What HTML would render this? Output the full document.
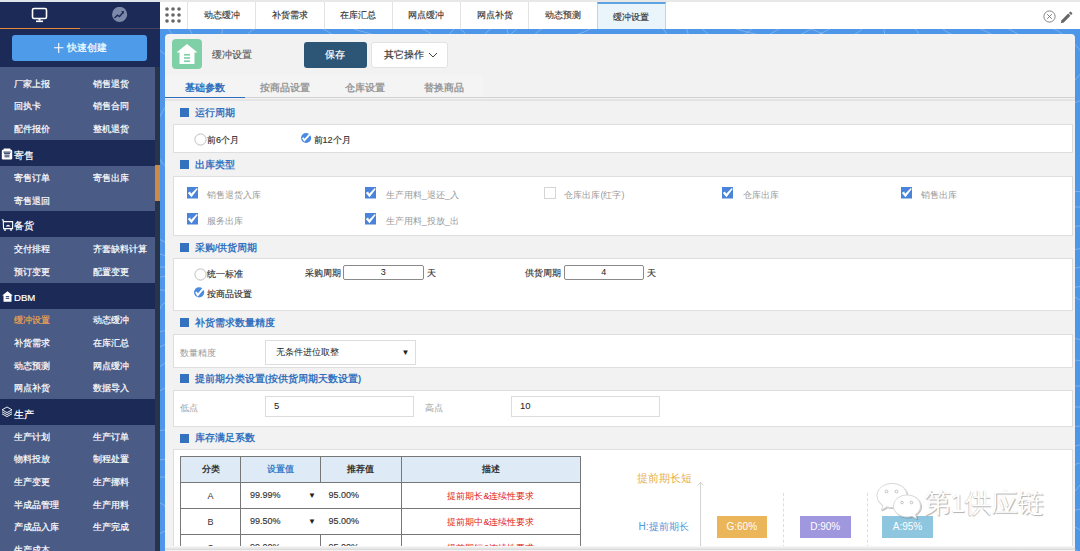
<!DOCTYPE html>
<html><head><meta charset="utf-8">
<style>
*{margin:0;padding:0;box-sizing:border-box}
html,body{width:1080px;height:551px;overflow:hidden;background:#4e96e7;font-family:"Liberation Sans",sans-serif}
.a{position:absolute;white-space:nowrap}
#side{position:absolute;left:0;top:0;width:160px;height:551px;background:#1b2a57;overflow:hidden}
.mi{position:absolute;color:#fff;font-size:9px;line-height:12px;-webkit-text-stroke-width:0.2px}
.grp{position:absolute;left:0;width:155px;background:#4a5b86}
.hd{position:absolute;left:14px;color:#fff;font-size:9.6px;line-height:14px;-webkit-text-stroke-width:0.2px}
#top{position:absolute;left:160px;top:0;width:920px;height:29px;background:#fff;border-top:2px solid #e8e8e8}
.tab{position:absolute;top:0;height:27px;border-right:1px solid #e3e3e3;font-size:9px;color:#333;-webkit-text-stroke-width:0.15px;text-align:center;line-height:26px}
#card{position:absolute;left:165px;top:34px;width:910px;height:517px;background:#f2f2f2;border-radius:4px 4px 0 0;overflow:hidden}
.sq{position:absolute;width:9px;height:9px;background:#3471bf}
.st{position:absolute;color:#3471bf;font-size:9.5px;font-weight:bold;line-height:12px}
.box{position:absolute;left:8px;width:900px;background:#fff;border:1px solid #dedede}
.lbl{position:absolute;font-size:9px;color:#999;line-height:12px}
.cb{position:absolute;width:11px;height:11px;background:#4a8ae0}
.txt{position:absolute;font-size:9px;color:#333;line-height:12px;-webkit-text-stroke-width:0.15px}
</style></head><body>
<svg class="a" style="left:0;top:0" width="1080" height="551" viewBox="0 0 1080 551" fill="none" stroke="rgba(255,255,255,0.32)" stroke-width="0.8"><path d="M335 60 L334 62 L332 64 L329 65 L326 66 L323 67 L320 67 L318 68 L316 68 L314 69 L314 70 L313 72 L312 73 L311 75 L310 77 L308 79 L306 80 L303 81 L300 81 L297 81 L294 81 L291 80 L288 80 L286 79 L283 78 L281 77 L278 76 L276 75 L275 73 L274 71 L274 69 L275 67 L276 66 L277 64 L279 62 L280 61 L280 60 L280 59 L278 58 L277 56 L275 54 L274 52 L273 50 L272 48 L273 46 L275 44 L277 43 L280 42 L283 42 L287 42 L290 42 L293 43 L295 43 L298 43 L300 43 L302 43 L305 43 L307 43 L310 43 L312 44 L314 45 L316 46 L318 47 L319 48 L321 49 L323 50 L325 51 L327 52 L330 53 L332 55 L334 56 L335 58 L335 60"/><path d="M367 60 L365 64 L360 67 L355 69 L349 71 L343 72 L337 73 L333 74 L330 76 L328 78 L327 80 L326 83 L325 87 L322 90 L319 93 L315 96 L311 98 L305 99 L300 100 L294 100 L289 99 L283 99 L278 98 L273 97 L267 95 L262 94 L258 92 L254 89 L251 85 L250 82 L251 78 L253 74 L255 70 L258 67 L260 64 L262 62 L262 60 L260 58 L258 55 L254 52 L251 49 L248 45 L247 41 L247 37 L249 33 L252 30 L257 28 L263 27 L269 27 L275 26 L281 27 L286 27 L291 27 L295 26 L300 26 L305 26 L310 26 L314 26 L319 28 L323 29 L327 31 L330 33 L333 35 L336 37 L340 39 L344 41 L348 43 L353 44 L358 47 L363 49 L366 53 L368 56 L367 60"/><path d="M397 60 L392 65 L385 69 L377 73 L368 75 L360 77 L353 79 L348 81 L344 83 L342 86 L341 90 L339 95 L336 99 L333 104 L328 108 L322 112 L315 114 L308 115 L300 116 L292 116 L284 116 L276 116 L268 115 L260 114 L252 112 L244 110 L237 107 L232 102 L229 97 L229 91 L230 85 L234 79 L238 74 L242 70 L244 66 L246 63 L245 60 L242 57 L237 53 L232 49 L227 43 L223 38 L222 32 L223 26 L227 22 L233 18 L240 15 L248 14 L256 13 L264 12 L272 12 L279 11 L286 11 L293 10 L300 9 L307 9 L314 10 L321 11 L327 14 L333 16 L337 19 L342 23 L346 26 L351 28 L357 30 L364 32 L371 34 L379 37 L387 40 L393 44 L397 49 L399 55 L397 60"/><path d="M437 60 L429 67 L419 73 L407 78 L395 82 L384 84 L375 87 L369 90 L365 94 L363 99 L360 105 L357 111 L353 117 L347 123 L340 128 L331 132 L321 135 L311 137 L300 138 L289 139 L278 139 L266 140 L254 140 L241 139 L229 137 L218 133 L209 128 L203 121 L199 113 L200 104 L203 95 L208 87 L214 80 L219 74 L222 69 L222 64 L219 60 L214 55 L207 50 L199 43 L193 36 L189 28 L189 20 L191 12 L198 6 L206 1 L217 -2 L228 -5 L239 -6 L249 -8 L260 -9 L270 -11 L280 -12 L290 -14 L300 -14 L310 -14 L320 -12 L330 -9 L338 -5 L345 -1 L352 4 L358 8 L365 12 L372 15 L381 17 L392 20 L404 22 L416 26 L427 31 L435 37 L440 45 L441 52 L437 60"/><path d="M461 60 L451 68 L438 75 L424 81 L411 85 L400 89 L391 93 L385 97 L381 102 L378 109 L375 116 L370 123 L364 130 L356 136 L347 141 L336 144 L325 147 L313 150 L300 152 L287 153 L273 155 L259 157 L243 157 L228 157 L213 154 L200 149 L190 142 L183 133 L181 123 L182 111 L187 101 L194 91 L200 83 L205 76 L207 70 L206 65 L201 60 L193 54 L184 47 L176 39 L169 30 L166 21 L167 12 L172 4 L180 -3 L191 -8 L202 -13 L215 -16 L227 -19 L239 -22 L251 -24 L263 -27 L275 -29 L287 -31 L300 -31 L313 -29 L324 -26 L335 -22 L344 -16 L353 -10 L360 -5 L367 -0 L376 3 L386 6 L399 8 L413 11 L428 14 L443 18 L455 25 L464 32 L469 41 L468 51 L461 60"/><path d="M496 60 L483 70 L467 78 L451 85 L436 91 L424 96 L416 102 L409 108 L405 115 L400 123 L395 131 L389 139 L380 147 L369 153 L357 158 L344 162 L330 166 L315 169 L300 172 L284 176 L266 179 L248 182 L228 184 L208 183 L189 180 L174 173 L162 163 L155 150 L154 137 L157 122 L164 109 L172 97 L179 88 L183 80 L184 73 L180 67 L172 60 L162 52 L151 44 L142 34 L136 23 L134 12 L137 1 L144 -8 L155 -16 L167 -23 L181 -29 L195 -33 L209 -38 L223 -43 L238 -47 L252 -51 L268 -54 L284 -56 L300 -55 L316 -52 L330 -46 L343 -40 L354 -32 L363 -25 L372 -18 L382 -13 L394 -10 L408 -8 L425 -6 L444 -3 L464 1 L482 7 L497 15 L506 25 L509 37 L506 49 L496 60"/><path d="M648 80 L649 82 L650 83 L649 85 L647 86 L645 87 L643 88 L640 89 L638 89 L635 90 L633 90 L632 90 L630 91 L629 91 L627 92 L625 92 L624 93 L622 93 L620 93 L618 93 L616 93 L615 93 L613 93 L610 93 L608 93 L605 93 L602 93 L599 93 L596 92 L594 91 L592 90 L592 88 L592 86 L593 85 L595 83 L597 81 L599 80 L601 79 L602 78 L603 77 L603 76 L603 75 L603 74 L603 72 L603 71 L603 70 L605 68 L606 67 L608 67 L610 66 L612 66 L614 65 L616 65 L618 64 L620 64 L622 64 L625 64 L627 64 L629 64 L631 65 L633 66 L634 68 L635 69 L635 71 L635 72 L636 73 L637 74 L638 75 L640 75 L642 76 L644 77 L647 79 L648 80"/><path d="M685 80 L687 84 L686 87 L684 91 L680 94 L675 96 L670 98 L664 99 L659 101 L655 102 L651 103 L647 104 L643 105 L640 107 L636 108 L632 108 L628 109 L624 109 L620 109 L616 108 L612 108 L608 108 L603 109 L598 109 L592 110 L585 111 L578 111 L571 110 L565 109 L561 106 L558 103 L557 98 L558 94 L561 90 L565 86 L569 83 L573 80 L577 78 L579 75 L580 73 L580 71 L580 68 L580 65 L580 62 L581 60 L583 57 L586 54 L589 53 L593 51 L597 50 L602 48 L606 47 L610 46 L615 44 L620 43 L625 42 L631 42 L636 43 L641 44 L645 47 L648 50 L650 53 L652 56 L653 60 L654 62 L655 65 L658 66 L661 68 L666 70 L671 71 L677 74 L681 77 L685 80"/><path d="M726 80 L728 86 L726 92 L722 97 L716 102 L708 106 L700 109 L692 111 L684 114 L677 116 L671 118 L665 120 L659 123 L653 124 L647 126 L640 126 L633 126 L626 126 L620 125 L614 124 L607 124 L601 125 L593 127 L584 128 L574 130 L562 132 L551 132 L539 130 L530 127 L523 122 L519 116 L519 110 L521 102 L526 96 L532 90 L539 84 L545 80 L549 76 L552 72 L553 69 L553 65 L553 60 L553 56 L554 51 L557 47 L561 43 L566 39 L571 37 L578 34 L584 32 L590 29 L597 26 L604 23 L612 21 L620 18 L629 17 L638 17 L646 18 L654 22 L660 26 L665 31 L668 37 L670 43 L672 48 L674 52 L677 55 L682 58 L689 60 L697 62 L706 66 L715 70 L722 74 L726 80"/><path d="M766 80 L767 88 L763 96 L757 103 L748 109 L738 114 L728 119 L718 123 L709 127 L701 130 L693 134 L684 137 L676 140 L666 142 L657 143 L647 143 L637 142 L628 141 L620 139 L612 139 L603 140 L594 141 L582 144 L569 148 L555 151 L539 153 L522 153 L508 150 L495 145 L487 138 L483 129 L483 120 L488 110 L494 101 L502 93 L510 86 L516 80 L521 75 L523 69 L524 64 L524 58 L525 52 L526 46 L529 40 L534 35 L540 30 L547 26 L555 22 L563 18 L571 15 L579 10 L588 5 L598 1 L608 -4 L620 -7 L632 -9 L645 -8 L656 -5 L666 0 L674 7 L680 15 L684 23 L687 30 L689 37 L693 42 L699 45 L707 49 L718 52 L730 55 L742 60 L753 65 L761 72 L766 80"/><path d="M793 80 L793 89 L788 99 L780 107 L770 114 L759 121 L749 126 L739 132 L729 137 L720 142 L710 147 L699 151 L688 154 L676 155 L664 155 L652 154 L640 152 L630 150 L620 149 L610 149 L600 151 L588 154 L574 159 L558 163 L539 167 L520 169 L501 169 L484 165 L471 158 L462 149 L459 138 L460 127 L465 115 L473 105 L481 95 L488 87 L494 80 L498 73 L500 67 L501 60 L502 53 L504 46 L507 39 L512 33 L519 27 L527 22 L536 17 L545 13 L553 8 L562 2 L571 -4 L581 -11 L593 -17 L606 -23 L620 -27 L635 -28 L650 -26 L664 -22 L675 -14 L684 -5 L690 4 L694 14 L698 22 L702 29 L708 34 L716 38 L727 41 L741 45 L755 49 L769 55 L781 62 L790 71 L793 80"/><path d="M822 80 L820 91 L814 101 L805 111 L794 120 L783 128 L773 135 L762 142 L752 149 L741 156 L729 161 L716 166 L701 168 L686 169 L671 168 L656 165 L643 162 L631 160 L620 159 L609 160 L597 163 L582 169 L565 175 L544 181 L522 186 L499 188 L477 186 L459 181 L444 172 L436 161 L433 147 L435 134 L441 121 L449 109 L457 98 L463 89 L468 80 L471 72 L473 64 L474 56 L477 47 L481 39 L487 32 L495 25 L504 19 L514 14 L524 8 L533 2 L542 -4 L551 -12 L561 -21 L573 -30 L587 -38 L603 -45 L620 -49 L638 -49 L656 -46 L671 -39 L684 -29 L693 -18 L700 -7 L705 4 L710 13 L716 20 L725 25 L736 29 L751 33 L768 37 L784 43 L800 50 L812 59 L819 69 L822 80"/><path d="M860 80 L856 93 L849 105 L839 117 L828 127 L818 138 L807 148 L796 157 L785 166 L771 175 L756 181 L738 185 L719 187 L699 186 L680 183 L663 179 L647 175 L633 173 L620 173 L607 176 L591 182 L573 190 L551 198 L526 206 L499 211 L471 213 L446 210 L425 202 L410 190 L402 176 L399 160 L402 144 L408 128 L415 114 L422 102 L427 91 L431 80 L434 70 L436 60 L439 50 L444 40 L452 31 L461 23 L472 15 L484 9 L496 2 L507 -4 L516 -12 L526 -22 L536 -33 L547 -45 L561 -57 L579 -67 L598 -75 L620 -78 L642 -77 L663 -72 L681 -62 L695 -49 L706 -35 L714 -22 L721 -10 L728 -0 L737 7 L750 12 L765 16 L784 21 L804 26 L823 34 L840 43 L852 54 L859 67 L860 80"/><path d="M925 40 L927 41 L929 43 L929 45 L929 47 L928 48 L927 50 L924 50 L921 51 L918 51 L915 51 L912 51 L910 50 L908 50 L906 50 L905 51 L903 51 L902 52 L900 53 L898 53 L896 53 L894 54 L892 53 L890 53 L888 53 L886 52 L884 52 L882 51 L879 51 L877 50 L875 49 L873 48 L872 46 L871 45 L872 43 L873 41 L874 40 L877 39 L879 38 L881 37 L883 36 L884 35 L884 34 L885 33 L884 32 L884 30 L885 29 L886 27 L887 26 L889 25 L891 24 L893 24 L895 24 L898 24 L900 25 L902 25 L904 26 L906 26 L908 27 L910 27 L912 27 L913 28 L915 29 L916 30 L917 31 L918 32 L918 33 L919 35 L919 36 L920 37 L922 38 L924 39 L925 40"/><path d="M960 40 L964 44 L968 47 L969 52 L968 56 L965 59 L960 62 L954 64 L947 65 L940 65 L933 65 L927 64 L922 64 L918 64 L914 65 L911 66 L908 67 L904 68 L900 69 L896 70 L891 71 L887 71 L882 70 L878 69 L873 69 L869 68 L863 67 L858 67 L852 65 L846 64 L841 61 L836 59 L834 55 L833 51 L835 47 L838 43 L842 40 L848 37 L853 35 L857 33 L860 31 L862 29 L863 27 L863 24 L863 21 L863 17 L864 13 L866 10 L870 7 L874 5 L879 4 L884 4 L890 4 L895 4 L900 5 L905 6 L909 7 L914 7 L919 8 L923 9 L928 10 L931 12 L935 14 L937 17 L939 20 L940 23 L941 25 L942 28 L944 30 L947 32 L951 34 L955 37 L960 40"/><path d="M1001 40 L1008 46 L1013 52 L1014 59 L1012 65 L1006 71 L997 75 L987 78 L975 79 L964 80 L953 80 L944 80 L937 80 L930 81 L924 82 L919 84 L913 86 L907 87 L900 89 L893 89 L886 89 L879 89 L872 88 L865 87 L857 86 L849 86 L839 85 L829 84 L819 83 L809 80 L800 76 L794 71 L791 65 L791 58 L794 52 L800 45 L808 40 L817 35 L824 32 L831 28 L835 25 L837 22 L838 17 L837 13 L837 7 L838 1 L840 -4 L845 -9 L851 -13 L858 -16 L866 -18 L875 -18 L884 -18 L892 -17 L900 -17 L908 -16 L916 -16 L924 -15 L932 -14 L939 -12 L946 -10 L952 -6 L956 -2 L959 3 L961 8 L963 12 L965 17 L967 20 L971 24 L977 27 L985 31 L993 35 L1001 40"/><path d="M1028 40 L1036 47 L1040 55 L1040 64 L1036 71 L1028 77 L1017 82 L1004 85 L990 87 L977 88 L965 89 L955 89 L946 90 L938 92 L931 93 L924 96 L916 97 L908 99 L900 99 L892 99 L883 99 L875 98 L867 97 L858 96 L848 96 L837 96 L825 96 L811 95 L798 94 L786 90 L775 85 L769 78 L766 71 L767 62 L773 54 L781 47 L790 40 L800 35 L809 30 L815 26 L819 22 L820 17 L821 11 L820 5 L821 -2 L822 -8 L826 -15 L833 -20 L841 -24 L850 -27 L860 -29 L870 -30 L880 -30 L890 -30 L900 -30 L910 -30 L920 -30 L930 -30 L940 -28 L949 -26 L957 -22 L963 -17 L968 -11 L971 -4 L973 2 L975 7 L977 12 L981 16 L988 20 L996 24 L1007 28 L1018 34 L1028 40"/><path d="M1071 40 L1080 50 L1084 60 L1083 71 L1075 80 L1064 88 L1049 94 L1032 98 L1015 100 L999 102 L985 104 L973 105 L962 107 L952 110 L942 112 L932 114 L921 116 L911 117 L900 116 L889 115 L879 114 L869 113 L858 112 L846 112 L832 113 L817 114 L799 115 L781 114 L763 112 L748 107 L735 99 L728 90 L726 80 L729 69 L738 58 L749 48 L761 40 L772 33 L782 27 L788 21 L792 15 L793 9 L793 1 L793 -7 L794 -16 L798 -24 L804 -31 L813 -37 L824 -42 L836 -45 L849 -47 L862 -49 L875 -50 L887 -51 L900 -53 L913 -54 L927 -54 L940 -54 L953 -51 L965 -47 L975 -41 L982 -33 L987 -25 L990 -16 L992 -8 L995 -1 L999 4 L1006 9 L1016 14 L1029 18 L1043 24 L1058 31 L1071 40"/><path d="M1109 40 L1118 52 L1121 64 L1117 76 L1107 87 L1092 96 L1074 103 L1055 108 L1037 112 L1020 115 L1004 118 L990 121 L977 124 L965 127 L952 129 L939 131 L926 132 L913 131 L900 130 L888 128 L876 126 L864 125 L850 125 L835 127 L818 129 L798 131 L776 132 L753 132 L732 128 L714 122 L700 112 L693 100 L693 87 L699 74 L710 61 L723 50 L736 40 L748 32 L757 24 L763 17 L766 9 L766 1 L766 -8 L767 -18 L771 -28 L777 -37 L786 -45 L798 -51 L811 -56 L826 -60 L840 -63 L855 -65 L870 -68 L884 -71 L900 -74 L916 -76 L933 -77 L949 -75 L965 -72 L978 -65 L989 -57 L997 -46 L1002 -36 L1004 -25 L1007 -16 L1011 -9 L1018 -2 L1028 3 L1042 8 L1059 13 L1077 20 L1095 29 L1109 40"/><path d="M168 300 L166 301 L165 303 L163 304 L162 305 L161 306 L161 307 L160 309 L159 310 L157 311 L156 312 L154 312 L152 313 L150 313 L148 314 L146 314 L144 315 L142 315 L140 316 L138 317 L135 317 L133 317 L130 317 L127 317 L125 316 L124 314 L123 312 L123 311 L123 309 L124 307 L124 306 L124 305 L123 304 L122 303 L120 302 L118 301 L116 300 L114 299 L113 297 L112 295 L112 294 L113 292 L114 291 L116 289 L118 288 L120 287 L122 286 L124 285 L126 285 L128 284 L130 284 L133 284 L135 284 L138 284 L140 285 L142 287 L143 288 L145 289 L146 290 L147 290 L149 290 L151 290 L153 290 L156 290 L159 290 L163 290 L165 291 L168 292 L169 293 L170 295 L170 297 L169 298 L168 300"/><path d="M205 300 L202 303 L199 306 L197 309 L195 312 L193 315 L191 318 L188 321 L185 324 L182 326 L177 328 L173 329 L168 330 L163 331 L159 332 L154 333 L150 335 L145 337 L140 339 L134 341 L128 342 L122 343 L115 342 L110 340 L105 337 L102 333 L101 329 L101 325 L101 320 L102 317 L102 314 L101 311 L99 309 L95 307 L91 305 L86 303 L82 300 L78 297 L75 293 L74 289 L75 285 L77 282 L80 278 L83 275 L87 272 L91 270 L96 267 L100 265 L105 262 L111 261 L117 260 L123 260 L129 261 L135 263 L140 266 L144 269 L148 272 L151 275 L154 276 L157 277 L161 277 L166 276 L173 276 L180 275 L188 275 L195 276 L201 278 L206 281 L209 284 L210 288 L209 292 L207 296 L205 300"/><path d="M231 300 L228 305 L225 309 L223 314 L220 318 L218 323 L215 327 L210 331 L205 334 L199 337 L192 339 L185 340 L178 342 L172 343 L166 344 L160 347 L154 350 L147 353 L140 357 L132 360 L123 362 L113 362 L105 361 L97 358 L91 353 L88 347 L86 340 L86 334 L86 328 L86 323 L86 320 L83 316 L79 314 L74 311 L68 308 L61 304 L55 300 L51 295 L49 290 L48 285 L50 279 L52 274 L56 270 L61 265 L65 261 L70 256 L76 252 L82 248 L89 245 L97 243 L106 242 L115 243 L124 245 L133 248 L140 253 L146 257 L151 262 L155 265 L159 267 L165 267 L171 267 L179 265 L188 264 L199 263 L209 264 L219 265 L227 268 L233 273 L237 278 L238 284 L236 289 L234 295 L231 300"/><path d="M259 300 L257 306 L254 313 L252 319 L249 325 L245 331 L240 336 L234 341 L226 345 L217 348 L207 350 L198 352 L189 353 L181 355 L174 358 L167 362 L159 367 L150 372 L140 377 L129 381 L117 383 L104 383 L93 380 L84 375 L77 368 L73 360 L71 352 L70 344 L70 337 L70 331 L67 326 L63 322 L57 319 L50 315 L41 311 L34 306 L28 300 L23 294 L21 287 L22 280 L24 274 L27 267 L31 261 L36 254 L41 248 L47 242 L54 236 L62 230 L71 226 L83 223 L95 223 L108 224 L120 228 L131 234 L140 240 L148 246 L154 251 L160 254 L166 256 L173 256 L182 255 L193 253 L206 251 L220 250 L233 251 L245 254 L255 259 L261 265 L265 272 L266 279 L264 286 L262 293 L259 300"/><path d="M294 300 L292 308 L290 317 L288 325 L284 333 L279 340 L271 347 L261 353 L249 357 L236 360 L224 362 L212 364 L201 366 L192 370 L183 374 L174 380 L165 388 L153 395 L140 402 L125 406 L109 408 L94 407 L80 403 L69 395 L61 386 L56 375 L54 364 L52 355 L51 347 L49 340 L45 334 L38 330 L29 325 L20 320 L10 314 L2 308 L-4 300 L-8 292 L-9 284 L-8 275 L-5 267 L-2 259 L2 250 L6 241 L11 233 L18 224 L26 215 L37 208 L50 203 L65 200 L82 200 L99 204 L114 209 L128 217 L140 225 L149 233 L157 238 L165 242 L173 243 L183 242 L196 239 L211 237 L227 235 L244 235 L260 237 L274 241 L285 248 L292 256 L296 264 L298 274 L297 283 L295 292 L294 300"/><path d="M1127 300 L1125 301 L1123 303 L1121 303 L1118 304 L1117 305 L1116 306 L1115 307 L1115 308 L1115 310 L1115 311 L1115 313 L1114 315 L1112 317 L1110 318 L1108 319 L1105 319 L1103 319 L1100 319 L1097 318 L1095 318 L1093 317 L1090 316 L1088 316 L1086 315 L1084 314 L1083 313 L1082 311 L1082 310 L1082 308 L1082 307 L1082 305 L1083 304 L1083 303 L1082 302 L1081 301 L1080 300 L1078 299 L1075 297 L1074 296 L1072 294 L1072 292 L1072 290 L1074 288 L1076 287 L1078 287 L1081 286 L1084 286 L1087 286 L1090 286 L1092 286 L1094 286 L1096 286 L1098 285 L1100 285 L1102 285 L1104 285 L1106 285 L1109 285 L1110 286 L1112 287 L1114 288 L1116 288 L1117 289 L1119 290 L1122 291 L1124 291 L1126 292 L1128 294 L1129 295 L1129 297 L1129 298 L1127 300"/><path d="M1161 300 L1156 303 L1151 306 L1146 308 L1141 309 L1138 311 L1136 313 L1136 316 L1136 319 L1136 323 L1136 327 L1135 331 L1132 335 L1128 338 L1124 341 L1118 342 L1112 343 L1106 343 L1100 342 L1094 342 L1088 341 L1083 340 L1077 339 L1072 337 L1068 335 L1064 333 L1061 329 L1059 326 L1058 322 L1059 318 L1060 314 L1061 311 L1062 309 L1061 306 L1060 304 L1056 302 L1052 300 L1047 297 L1042 294 L1038 290 L1036 285 L1035 281 L1037 277 L1040 274 L1046 271 L1052 270 L1058 269 L1065 268 L1071 268 L1076 268 L1081 267 L1086 267 L1090 266 L1095 265 L1100 264 L1105 264 L1110 265 L1115 266 L1119 267 L1123 269 L1127 271 L1131 272 L1135 274 L1140 275 L1145 276 L1151 278 L1156 280 L1161 282 L1165 285 L1167 289 L1167 293 L1165 296 L1161 300"/><path d="M1188 300 L1181 304 L1173 308 L1166 311 L1160 314 L1157 317 L1155 320 L1155 324 L1155 329 L1155 335 L1154 340 L1152 346 L1148 351 L1142 356 L1134 359 L1126 361 L1117 362 L1109 362 L1100 362 L1091 362 L1083 361 L1074 360 L1066 359 L1058 356 L1051 353 L1045 349 L1041 344 L1039 338 L1039 332 L1041 326 L1043 321 L1045 316 L1045 313 L1044 309 L1040 307 L1034 304 L1027 300 L1019 296 L1012 290 L1006 284 L1004 278 L1004 272 L1007 267 L1013 262 L1021 259 L1030 256 L1039 255 L1048 254 L1056 253 L1064 252 L1071 250 L1078 249 L1085 248 L1093 247 L1100 246 L1107 247 L1115 248 L1121 250 L1127 253 L1133 255 L1139 258 L1145 260 L1152 261 L1160 263 L1168 264 L1177 266 L1185 269 L1193 273 L1198 278 L1200 283 L1199 289 L1195 295 L1188 300"/><path d="M1219 300 L1208 306 L1198 311 L1189 315 L1183 319 L1180 323 L1179 328 L1179 334 L1179 341 L1179 349 L1176 357 L1172 364 L1165 371 L1156 376 L1146 379 L1135 382 L1124 384 L1112 385 L1100 385 L1088 386 L1076 386 L1063 385 L1051 383 L1040 380 L1031 375 L1024 368 L1019 360 L1018 351 L1019 343 L1021 335 L1024 327 L1026 322 L1025 317 L1022 313 L1015 309 L1006 305 L995 300 L984 294 L975 286 L969 278 L967 270 L968 262 L974 255 L983 249 L994 244 L1006 241 L1017 239 L1029 236 L1039 234 L1049 232 L1059 230 L1069 227 L1079 226 L1089 225 L1100 225 L1110 227 L1120 230 L1129 233 L1137 237 L1145 240 L1153 243 L1162 245 L1172 246 L1184 247 L1197 249 L1210 252 L1221 256 L1231 262 L1236 269 L1238 277 L1235 285 L1228 293 L1219 300"/><path d="M1241 300 L1229 307 L1218 313 L1209 318 L1203 323 L1200 329 L1200 336 L1200 344 L1200 352 L1198 361 L1194 370 L1188 378 L1179 385 L1168 391 L1155 395 L1142 398 L1128 401 L1114 403 L1100 405 L1085 407 L1070 407 L1054 407 L1039 405 L1026 400 L1014 393 L1006 384 L1002 373 L1002 362 L1003 351 L1007 341 L1010 333 L1011 326 L1009 321 L1003 316 L993 312 L981 307 L967 300 L955 292 L945 283 L939 273 L938 263 L942 254 L949 246 L960 239 L973 233 L987 229 L1000 225 L1012 222 L1024 218 L1036 214 L1048 211 L1061 209 L1074 207 L1087 207 L1100 209 L1112 212 L1124 216 L1134 221 L1144 225 L1153 229 L1164 231 L1176 232 L1190 233 L1205 234 L1222 236 L1238 240 L1252 245 L1262 253 L1267 262 L1267 272 L1262 282 L1253 292 L1241 300"/><path d="M1259 300 L1246 308 L1235 315 L1227 321 L1222 328 L1220 335 L1220 343 L1220 352 L1218 362 L1215 372 L1209 381 L1200 389 L1189 396 L1176 402 L1162 407 L1148 411 L1132 415 L1117 419 L1100 423 L1082 426 L1064 427 L1046 427 L1028 424 L1013 417 L1001 408 L993 396 L989 383 L989 369 L992 357 L996 346 L998 337 L998 330 L993 324 L984 319 L972 314 L957 308 L942 300 L928 291 L919 280 L914 269 L915 258 L920 248 L930 239 L942 231 L956 225 L970 219 L984 213 L997 208 L1010 203 L1024 198 L1038 194 L1054 192 L1069 191 L1085 192 L1100 196 L1114 201 L1126 206 L1138 211 L1149 216 L1161 219 L1174 220 L1189 221 L1206 221 L1225 222 L1245 224 L1263 229 L1278 236 L1288 245 L1293 256 L1291 268 L1283 280 L1272 291 L1259 300"/><path d="M177 520 L178 522 L178 523 L178 525 L177 526 L175 527 L173 528 L171 529 L169 530 L167 531 L165 531 L163 532 L162 533 L160 533 L158 533 L156 534 L154 534 L152 533 L150 533 L148 532 L147 532 L145 532 L143 532 L141 532 L139 532 L136 533 L133 533 L129 533 L126 532 L124 532 L122 530 L120 529 L120 527 L121 525 L123 523 L124 521 L126 520 L128 519 L130 518 L131 517 L131 516 L132 515 L132 514 L133 513 L134 511 L135 510 L136 509 L137 509 L139 508 L141 507 L142 507 L144 506 L146 505 L148 504 L150 503 L152 503 L155 502 L158 502 L160 503 L162 504 L164 505 L165 507 L166 508 L166 510 L166 512 L166 513 L167 514 L168 515 L169 516 L171 516 L173 517 L175 519 L177 520"/><path d="M214 520 L216 524 L216 527 L214 531 L211 534 L208 537 L203 539 L199 541 L195 543 L190 545 L187 547 L182 549 L178 551 L174 552 L169 552 L164 552 L159 552 L154 550 L150 549 L146 548 L142 547 L139 547 L134 547 L129 548 L123 549 L116 551 L108 551 L100 551 L93 550 L87 547 L83 544 L81 540 L81 536 L83 531 L87 527 L91 523 L95 520 L98 517 L101 515 L103 512 L105 510 L106 507 L107 505 L109 502 L111 500 L114 498 L118 496 L121 494 L125 493 L128 491 L132 489 L136 487 L140 485 L145 482 L150 480 L156 478 L162 477 L168 477 L174 479 L179 481 L182 485 L185 489 L186 493 L186 497 L187 501 L188 503 L190 506 L192 508 L196 509 L201 511 L206 514 L210 517 L214 520"/><path d="M239 520 L241 525 L240 530 L238 535 L234 539 L229 543 L223 546 L218 550 L213 553 L208 556 L203 559 L197 562 L191 564 L184 565 L177 566 L169 565 L162 563 L156 561 L150 559 L145 558 L140 557 L134 557 L128 558 L120 560 L111 562 L101 564 L90 565 L79 564 L70 562 L62 559 L57 553 L55 548 L56 541 L59 535 L63 530 L68 524 L73 520 L77 516 L80 512 L82 509 L84 505 L86 501 L89 498 L92 495 L96 492 L101 489 L106 487 L111 485 L116 483 L120 480 L125 477 L130 474 L136 470 L142 466 L150 462 L158 460 L167 459 L176 460 L184 462 L190 467 L194 472 L197 478 L199 484 L200 489 L201 493 L203 497 L206 500 L211 502 L217 505 L224 508 L230 511 L236 515 L239 520"/><path d="M280 520 L281 527 L279 534 L275 541 L269 547 L263 553 L256 558 L250 564 L243 569 L236 574 L229 579 L220 583 L210 585 L200 587 L189 586 L178 584 L167 582 L158 578 L150 575 L143 573 L135 573 L127 574 L117 576 L105 580 L91 583 L76 586 L60 587 L45 585 L32 582 L23 576 L17 568 L15 559 L16 550 L20 542 L26 534 L32 526 L37 520 L41 514 L45 508 L48 503 L51 498 L55 492 L60 488 L66 483 L73 480 L81 477 L88 474 L95 471 L101 467 L107 463 L114 458 L121 451 L129 445 L139 439 L150 433 L163 430 L175 430 L188 432 L198 437 L207 444 L213 452 L217 460 L219 468 L221 475 L224 481 L228 486 L234 490 L242 493 L251 497 L261 501 L269 507 L276 513 L280 520"/><path d="M1122 520 L1122 521 L1122 522 L1124 524 L1125 526 L1127 528 L1129 530 L1130 533 L1130 536 L1128 538 L1126 540 L1123 541 L1120 542 L1116 542 L1112 541 L1109 541 L1106 540 L1103 539 L1100 539 L1097 538 L1095 538 L1092 538 L1090 537 L1088 536 L1086 535 L1084 534 L1083 533 L1081 532 L1080 530 L1079 529 L1077 528 L1075 527 L1072 526 L1069 525 L1066 524 L1064 522 L1062 520 L1062 518 L1062 516 L1064 514 L1067 512 L1070 511 L1073 510 L1077 510 L1080 509 L1082 509 L1084 508 L1085 507 L1087 505 L1088 504 L1090 502 L1092 500 L1094 499 L1097 498 L1100 498 L1103 498 L1106 498 L1109 499 L1112 500 L1114 501 L1117 502 L1119 503 L1121 504 L1124 505 L1125 507 L1127 508 L1127 510 L1127 512 L1127 514 L1126 516 L1124 517 L1123 519 L1122 520"/><path d="M1140 520 L1140 522 L1142 525 L1145 528 L1149 531 L1152 535 L1155 540 L1157 545 L1156 549 L1153 553 L1149 557 L1143 559 L1137 560 L1130 560 L1123 559 L1117 559 L1111 558 L1105 557 L1100 556 L1095 556 L1090 555 L1086 554 L1081 552 L1077 551 L1074 548 L1071 546 L1069 543 L1066 541 L1064 539 L1061 537 L1057 536 L1052 534 L1046 532 L1041 530 L1035 527 L1031 524 L1028 520 L1028 516 L1030 512 L1034 509 L1039 506 L1045 504 L1052 503 L1057 501 L1062 500 L1066 499 L1069 497 L1072 495 L1074 492 L1077 489 L1080 485 L1084 483 L1089 481 L1094 479 L1100 479 L1106 479 L1111 480 L1117 481 L1122 483 L1127 484 L1132 486 L1137 487 L1141 489 L1145 492 L1149 494 L1151 498 L1152 501 L1151 505 L1149 509 L1147 512 L1144 515 L1141 518 L1140 520"/><path d="M1159 520 L1160 523 L1164 527 L1169 532 L1175 537 L1180 543 L1184 550 L1185 557 L1183 564 L1179 569 L1172 573 L1163 576 L1153 578 L1143 578 L1134 578 L1125 577 L1116 577 L1108 576 L1100 575 L1092 574 L1085 573 L1078 571 L1072 568 L1066 565 L1062 561 L1058 557 L1055 553 L1052 550 L1048 547 L1042 545 L1035 543 L1027 541 L1018 539 L1009 535 L1001 531 L996 526 L993 520 L993 514 L997 509 L1003 504 L1012 500 L1021 497 L1030 495 L1038 493 L1044 491 L1049 488 L1053 485 L1056 481 L1060 477 L1064 472 L1070 468 L1076 464 L1084 462 L1092 461 L1100 461 L1108 461 L1116 462 L1124 464 L1132 465 L1140 467 L1148 468 L1156 470 L1163 473 L1169 477 L1174 481 L1176 487 L1177 492 L1175 498 L1171 504 L1167 509 L1163 513 L1160 517 L1159 520"/><path d="M1177 520 L1180 524 L1186 530 L1194 536 L1202 543 L1208 551 L1212 560 L1212 569 L1208 577 L1201 583 L1192 588 L1180 592 L1168 594 L1156 595 L1144 595 L1132 595 L1121 595 L1111 595 L1100 595 L1090 593 L1080 591 L1071 588 L1063 583 L1057 578 L1052 572 L1047 567 L1043 562 L1039 558 L1032 555 L1024 553 L1014 551 L1002 549 L990 545 L978 540 L968 535 L961 528 L959 520 L961 512 L967 505 L977 499 L988 494 L999 491 L1010 487 L1019 484 L1026 481 L1031 477 L1036 472 L1041 467 L1046 461 L1052 456 L1060 451 L1069 448 L1079 445 L1089 444 L1100 444 L1111 445 L1121 446 L1131 447 L1142 448 L1153 449 L1164 451 L1175 453 L1185 457 L1193 462 L1198 469 L1200 476 L1199 484 L1195 492 L1190 500 L1184 506 L1179 511 L1177 516 L1177 520"/></svg>
<div id="side">
  <div class="a" style="left:0;top:0;width:160px;height:2px;background:#dfe3ea"></div>
  <!-- monitor icon -->
  <svg class="a" style="left:31px;top:7px" width="18" height="16" viewBox="0 0 18 16"><rect x="1.5" y="1.5" width="14" height="10" rx="1.5" fill="none" stroke="#fff" stroke-width="1.6"/><rect x="7.5" y="11.5" width="2" height="2" fill="#fff"/><rect x="5" y="13.5" width="7" height="1.6" fill="#fff"/></svg>
  <!-- trend icon -->
  <svg class="a" style="left:112px;top:7px" width="16" height="16" viewBox="0 0 16 16"><circle cx="7.6" cy="7.4" r="7.6" fill="#7b88a8"/><path d="M2.5 11 L5.5 8.2 L7.5 9.5 L11 5.5" fill="none" stroke="#1b2a57" stroke-width="1.4"/><path d="M9 4.3 L12 4 L11.7 7 Z" fill="#1b2a57"/></svg>
  <div class="a" style="left:0;top:28px;width:80px;height:1px;background:#e8863a"></div>
  <div class="a" style="left:80px;top:28px;width:80px;height:1px;background:#4b3f5c"></div>
  <div class="a" style="left:12px;top:35px;width:135px;height:26px;background:#4d9be9;border-radius:3px;color:#fff;font-size:10.4px;line-height:26px;text-align:center;padding-left:14.5px;-webkit-text-stroke-width:0.2px">快速创建</div>
  <svg class="a" style="left:53.7px;top:42.8px" width="10" height="10" viewBox="0 0 10 10"><path d="M4.7 0 V10 M0 4.7 H9.4" stroke="#fff" stroke-width="1.1"/></svg>
  <div class="a" style="left:155px;top:67px;width:5px;height:484px;background:#29334a"></div>
  <div class="a" style="left:155px;top:165px;width:5px;height:36px;background:#cc8a48"></div>

  <div class="grp" style="top:67px;height:73px"></div>
  <div class="mi" style="left:14px;top:77.5px">厂家上报</div><div class="mi" style="left:93px;top:77.5px">销售退货</div>
  <div class="mi" style="left:14px;top:100.2px">回执卡</div><div class="mi" style="left:93px;top:100.2px">销售合同</div>
  <div class="mi" style="left:14px;top:122.8px">配件报价</div><div class="mi" style="left:93px;top:122.8px">整机退货</div>

<svg class="a" style="left:1px;top:147.5px" width="12" height="12" viewBox="0 0 12 12"><rect x="0.8" y="1.8" width="10.4" height="9.6" rx="1.2" fill="#fff"/><rect x="2.5" y="0.6" width="7" height="1.6" rx="0.6" fill="#fff"/><rect x="2.4" y="3.6" width="7.2" height="1" fill="#1b2a57"/><path d="M3 5.6 h6 M3.5 7.2 h5 M3.5 8.8 h5" stroke="#1b2a57" stroke-width="0.9"/></svg>
  <svg class="a" style="left:1px;top:219px" width="13" height="12" viewBox="0 0 13 12"><path d="M0.8 0.8 L2.2 1 L2.6 9.6 L11.6 9.6 L11.6 2.6 L2.4 2.6" fill="none" stroke="#fff" stroke-width="1.1"/><path d="M4.6 7.6 Q7 3.8 9.6 7.6 Z" fill="#fff"/><circle cx="4" cy="11" r="0.9" fill="#fff"/><circle cx="10" cy="11" r="0.9" fill="#fff"/></svg>
  <svg class="a" style="left:1.5px;top:291px" width="11" height="11" viewBox="0 0 11 11"><path d="M5.5 0.3 L10.8 4.4 L9.5 4.4 L9.5 10.8 L1.5 10.8 L1.5 4.4 L0.2 4.4 Z" fill="#fff"/><rect x="3.8" y="5.2" width="3.4" height="0.9" fill="#1b2a57"/><rect x="3.8" y="6.9" width="3.4" height="0.9" fill="#1b2a57"/></svg>
  <svg class="a" style="left:1px;top:406px" width="12" height="12" viewBox="0 0 12 12"><path d="M6 1 L11 3.8 L6 6.6 L1 3.8 Z" fill="none" stroke="#fff" stroke-width="0.9"/><path d="M1 5.8 L6 8.6 L11 5.8 M1 7.8 L6 10.6 L11 7.8" fill="none" stroke="#fff" stroke-width="0.9"/></svg>
  <div class="hd" style="top:149px">寄售</div>
  <div class="grp" style="top:165.6px;height:45.8px"></div>
  <div class="mi" style="left:14px;top:172.2px">寄售订单</div><div class="mi" style="left:93px;top:172.2px">寄售出库</div>
  <div class="mi" style="left:14px;top:194.9px">寄售退回</div>

  <div class="hd" style="top:219px">备货</div>
  <div class="grp" style="top:237px;height:46px"></div>
  <div class="mi" style="left:14px;top:242.8px">交付排程</div><div class="mi" style="left:93px;top:242.8px">齐套缺料计算</div>
  <div class="mi" style="left:14px;top:265.5px">预订变更</div><div class="mi" style="left:93px;top:265.5px">配置变更</div>

  <div class="hd" style="top:291px">DBM</div>
  <div class="grp" style="top:308.6px;height:90.6px"></div>
  <div class="mi" style="left:14px;top:314.3px;color:#eba150">缓冲设置</div><div class="mi" style="left:93px;top:314.3px">动态缓冲</div>
  <div class="mi" style="left:14px;top:336.9px">补货需求</div><div class="mi" style="left:93px;top:336.9px">在库汇总</div>
  <div class="mi" style="left:14px;top:359.6px">动态预测</div><div class="mi" style="left:93px;top:359.6px">网点缓冲</div>
  <div class="mi" style="left:14px;top:382.2px">网点补货</div><div class="mi" style="left:93px;top:382.2px">数据导入</div>

  <div class="hd" style="top:407.5px">生产</div>
  <div class="grp" style="top:424.7px;height:140px"></div>
  <div class="mi" style="left:14px;top:430.7px">生产计划</div><div class="mi" style="left:93px;top:430.7px">生产订单</div>
  <div class="mi" style="left:14px;top:453.4px">物料投放</div><div class="mi" style="left:93px;top:453.4px">制程处置</div>
  <div class="mi" style="left:14px;top:476px">生产变更</div><div class="mi" style="left:93px;top:476px">生产挪料</div>
  <div class="mi" style="left:14px;top:498.6px">半成品管理</div><div class="mi" style="left:93px;top:498.6px">生产用料</div>
  <div class="mi" style="left:14px;top:521.3px">产成品入库</div><div class="mi" style="left:93px;top:521.3px">生产完成</div>
  <div class="mi" style="left:14px;top:543.9px">生产成本</div>
</div>

<div id="top">
  <svg class="a" style="left:5px;top:5px" width="18" height="18" viewBox="0 0 18 18" fill="#666"><circle cx="2" cy="2" r="1.8"/><circle cx="8" cy="2" r="1.8"/><circle cx="14" cy="2" r="1.8"/><circle cx="2" cy="8" r="1.8"/><circle cx="8" cy="8" r="1.8"/><circle cx="14" cy="8" r="1.8"/><circle cx="2" cy="14" r="1.8"/><circle cx="8" cy="14" r="1.8"/><circle cx="14" cy="14" r="1.8"/></svg>
  <div class="a" style="left:27px;top:0;width:1px;height:27px;background:#e3e3e3"></div>
  <div class="tab" style="left:28px;width:68px">动态缓冲</div>
  <div class="tab" style="left:96px;width:68.5px">补货需求</div>
  <div class="tab" style="left:164.5px;width:68.0px">在库汇总</div>
  <div class="tab" style="left:232.5px;width:68.5px">网点缓冲</div>
  <div class="tab" style="left:301px;width:68px">网点补货</div>
  <div class="tab" style="left:369px;width:68.5px">动态预测</div>
  <div class="tab" style="left:437.0px;width:68.5px;background:#eaf4fb;border-left:1px solid #d0d0d0;border-right:1px solid #d0d0d0;border-top:2px solid #5ba4e0;line-height:26px">缓冲设置</div>
  <svg class="a" style="left:883px;top:8px" width="13" height="13" viewBox="0 0 13 13"><circle cx="6.5" cy="6.5" r="5.6" fill="none" stroke="#777" stroke-width="0.9"/><path d="M4.2 4.2 L8.8 8.8 M8.8 4.2 L4.2 8.8" stroke="#777" stroke-width="0.9"/></svg>
  <svg class="a" style="left:900px;top:9px" width="13" height="13" viewBox="0 0 13 13"><path d="M0.8 12.2 L1.6 9.2 L8.2 2.6 L10.4 4.8 L3.8 11.4 Z" fill="#666"/><path d="M8.9 1.9 L9.9 0.9 Q10.5 0.3 11.1 0.9 L12.1 1.9 Q12.7 2.5 12.1 3.1 L11.1 4.1 Z" fill="#666"/></svg>
</div>

<div id="card">
  <div class="a" style="left:7px;top:5px;width:30px;height:30px;background:#7fcfa7;border-radius:4px"></div>
  <svg class="a" style="left:7px;top:5px" width="30" height="30" viewBox="0 0 30 30"><path d="M15 5 L25.5 13.5 L22.5 13.5 L22.5 25 L7.5 25 L7.5 13.5 L4.5 13.5 Z" fill="#fff"/><rect x="12" y="15" width="6" height="1.6" fill="#7fcfa7"/><rect x="12" y="18.2" width="6" height="1.6" fill="#7fcfa7"/><rect x="12" y="21.4" width="6" height="1.6" fill="#7fcfa7"/></svg>
  <div class="a" style="left:46.7px;top:14px;font-size:10.4px;line-height:14px;color:#555;-webkit-text-stroke-width:0.15px">缓冲设置</div>
  <div class="a" style="left:138.6px;top:8px;width:63.6px;height:25.6px;background:#2d5575;border-radius:3px;color:#fff;font-size:10.1px;line-height:25.5px;-webkit-text-stroke-width:0.2px;text-align:center">保存</div>
  <div class="a" style="left:206px;top:8px;width:76.5px;height:25.5px;background:#fff;border:1px solid #e2e2e2;border-radius:3px;color:#333;font-size:10.4px;line-height:23.5px;padding-left:11.5px;-webkit-text-stroke-width:0.15px">其它操作</div>
  <svg class="a" style="left:263px;top:18px" width="10" height="7" viewBox="0 0 10 7"><path d="M1 1 L5 5 L9 1" fill="none" stroke="#444" stroke-width="1"/></svg>

  <div class="a" style="left:0;top:40.5px;width:318px;height:22.5px;background:#f4f4f4"></div>
  <div class="a" style="left:0;top:63px;width:910px;height:1px;background:#d2d2d2"></div>
  <div class="a" style="left:0;top:65px;width:910px;height:2px;background:#e4e4e4"></div>
  <div class="a" style="left:0;top:62.5px;width:79.5px;height:1.7px;background:#2f6dba"></div>
  <div class="a" style="left:20px;top:47px;font-size:10px;line-height:13px;color:#2f6dba;font-weight:bold">基础参数</div>
  <div class="a" style="left:95px;top:47px;font-size:10px;line-height:13px;color:#999;font-weight:bold">按商品设置</div>
  <div class="a" style="left:179.5px;top:47px;font-size:10px;line-height:13px;color:#999;font-weight:bold">仓库设置</div>
  <div class="a" style="left:259px;top:47px;font-size:10px;line-height:13px;color:#999;font-weight:bold">替换商品</div>

  <!-- section 1 -->
  <div class="sq" style="left:15px;top:74px"></div><div class="st" style="left:29.8px;top:72.5px">运行周期</div>
  <div class="box" style="top:90px;height:28.6px"></div>
  <svg class="a" style="left:28.5px;top:98.5px" width="13" height="13" viewBox="0 0 13 13"><circle cx="6.5" cy="6.5" r="5.6" fill="#fff" stroke="#b8b8b8" stroke-width="0.9"/></svg>
  <div class="txt" style="left:42px;top:100px">前6个月</div>
  <svg class="a" style="left:136.2px;top:99.3px" width="11" height="11" viewBox="0 0 11 11"><circle cx="5.1" cy="5" r="5" fill="#4a8ae0"/><path d="M1.8 4.8 L3.4 7.3 L9.2 0.8" fill="none" stroke="#fff" stroke-width="1.8"/></svg>
  <div class="txt" style="left:148.5px;top:100px">前12个月</div>

  <!-- section 2 -->
  <div class="sq" style="left:15px;top:126px"></div><div class="st" style="left:29.8px;top:124.5px">出库类型</div>
  <div class="box" style="top:141.8px;height:59.8px"></div>
  <svg class="a" style="left:22px;top:153px" width="11" height="11.5" viewBox="0 0 11 11.5"><rect width="11" height="11.5" fill="#4a84da"/><path d="M0.8 5.9 L3.1 4.5 L4.1 6.8 L9.9 1.0 L10.7 2.0 L4.5 10.2 Z" fill="#fff"/></svg>
  <div class="lbl" style="left:42.4px;top:154.7px">销售退货入库</div>
  <svg class="a" style="left:200px;top:153px" width="11" height="11.5" viewBox="0 0 11 11.5"><rect width="11" height="11.5" fill="#4a84da"/><path d="M0.8 5.9 L3.1 4.5 L4.1 6.8 L9.9 1.0 L10.7 2.0 L4.5 10.2 Z" fill="#fff"/></svg>
  <div class="lbl" style="left:220.8px;top:154.7px">生产用料_退还_入</div>
  <div class="a" style="left:378.7px;top:153px;width:12px;height:12px;border:1px solid #d5d5d5;background:#fff"></div>
  <div class="lbl" style="left:399.4px;top:154.7px">仓库出库(红字)</div>
  <svg class="a" style="left:557.4px;top:153px" width="11" height="11.5" viewBox="0 0 11 11.5"><rect width="11" height="11.5" fill="#4a84da"/><path d="M0.8 5.9 L3.1 4.5 L4.1 6.8 L9.9 1.0 L10.7 2.0 L4.5 10.2 Z" fill="#fff"/></svg>
  <div class="lbl" style="left:577.8px;top:154.7px">仓库出库</div>
  <svg class="a" style="left:735.8px;top:153px" width="11" height="11.5" viewBox="0 0 11 11.5"><rect width="11" height="11.5" fill="#4a84da"/><path d="M0.8 5.9 L3.1 4.5 L4.1 6.8 L9.9 1.0 L10.7 2.0 L4.5 10.2 Z" fill="#fff"/></svg>
  <div class="lbl" style="left:756px;top:154.7px">销售出库</div>
  <svg class="a" style="left:22px;top:179.3px" width="11" height="11.5" viewBox="0 0 11 11.5"><rect width="11" height="11.5" fill="#4a84da"/><path d="M0.8 5.9 L3.1 4.5 L4.1 6.8 L9.9 1.0 L10.7 2.0 L4.5 10.2 Z" fill="#fff"/></svg>
  <div class="lbl" style="left:42.4px;top:180.9px">服务出库</div>
  <svg class="a" style="left:200px;top:179.3px" width="11" height="11.5" viewBox="0 0 11 11.5"><rect width="11" height="11.5" fill="#4a84da"/><path d="M0.8 5.9 L3.1 4.5 L4.1 6.8 L9.9 1.0 L10.7 2.0 L4.5 10.2 Z" fill="#fff"/></svg>
  <div class="lbl" style="left:220.8px;top:180.9px">生产用料_投放_出</div>

  <!-- section 3 -->
  <div class="sq" style="left:15px;top:209px"></div><div class="st" style="left:29.8px;top:207.5px">采购/供货周期</div>
  <div class="box" style="top:224px;height:52.5px"></div>
  <svg class="a" style="left:28.5px;top:233.5px" width="13" height="13" viewBox="0 0 13 13"><circle cx="6.5" cy="6.5" r="5.6" fill="#fff" stroke="#b8b8b8" stroke-width="0.9"/></svg>
  <div class="txt" style="left:42px;top:234px">统一标准</div>
  <svg class="a" style="left:29px;top:252.5px" width="11" height="11" viewBox="0 0 11 11"><circle cx="5.1" cy="5.3" r="5.1" fill="#4a8ae0"/><path d="M2 5 L3.7 8.1 L9.6 1.2" fill="none" stroke="#fff" stroke-width="1.9"/></svg>
  <div class="txt" style="left:42px;top:253.5px">按商品设置</div>
  <div class="txt" style="left:139.5px;top:232.5px">采购周期</div>
  <div class="a" style="left:178px;top:231px;width:80.5px;height:14.5px;border:1px solid #8a8a8a;border-radius:2px;background:#fff;font-size:9px;line-height:12.5px;text-align:center;color:#222">3</div>
  <div class="txt" style="left:261.5px;top:232.5px">天</div>
  <div class="txt" style="left:360px;top:232.5px">供货周期</div>
  <div class="a" style="left:398.5px;top:231px;width:80.5px;height:14.5px;border:1px solid #8a8a8a;border-radius:2px;background:#fff;font-size:9px;line-height:12.5px;text-align:center;color:#222">4</div>
  <div class="txt" style="left:482px;top:232.5px">天</div>

  <!-- section 4 -->
  <div class="sq" style="left:15px;top:284px"></div><div class="st" style="left:29.8px;top:282.5px">补货需求数量精度</div>
  <div class="box" style="top:299.6px;height:34px"></div>
  <div class="lbl" style="left:14.5px;top:313px">数量精度</div>
  <div class="a" style="left:100px;top:306.3px;width:151px;height:24.5px;background:#fff;border:1px solid #ddd;font-size:9px;line-height:22px;color:#222;padding-left:9.5px">无条件进位取整</div>
  <div class="a" style="left:236.5px;top:313.5px;font-size:8px;line-height:10px;color:#222">▼</div>

  <!-- section 5 -->
  <div class="sq" style="left:15px;top:340px"></div><div class="st" style="left:29.8px;top:338.5px">提前期分类设置(按供货周期天数设置)</div>
  <div class="box" style="top:355.8px;height:37px"></div>
  <div class="lbl" style="left:14.5px;top:367.5px">低点</div>
  <div class="a" style="left:100px;top:361.5px;width:148.5px;height:21.5px;background:#fff;border:1px solid #dcdcdc;font-size:9.5px;line-height:18px;color:#222;padding-left:8px">5</div>
  <div class="lbl" style="left:260px;top:367.5px">高点</div>
  <div class="a" style="left:346px;top:361.5px;width:148.5px;height:21.5px;background:#fff;border:1px solid #dcdcdc;font-size:9.5px;line-height:18px;color:#222;padding-left:8px">10</div>

  <!-- section 6 -->
  <div class="sq" style="left:15px;top:399.5px"></div><div class="st" style="left:29.8px;top:397.5px">库存满足系数</div>
  <div class="box" style="top:415px;height:120px"></div>
  <div class="a" style="left:15px;top:422px;width:401px;height:100px;background:#fff;border:1px solid #777;border-bottom:none"></div>
  <div class="a" style="left:16px;top:423px;width:399px;height:25px;background:#deebf6"></div>
  <div class="a" style="left:15px;top:448px;width:401px;height:1px;background:#777"></div>
  <div class="a" style="left:15px;top:474px;width:401px;height:1px;background:#777"></div>
  <div class="a" style="left:15px;top:500px;width:401px;height:1px;background:#777"></div>
  <div class="a" style="left:75px;top:422px;width:1px;height:100px;background:#777"></div>
  <div class="a" style="left:155px;top:422px;width:1px;height:100px;background:#777"></div>
  <div class="a" style="left:236px;top:422px;width:1px;height:100px;background:#777"></div>
  <div class="a" style="left:76px;top:449px;width:81px;height:24.5px;background:#fff"></div>
  <div class="a" style="left:76px;top:475px;width:81px;height:24.5px;background:#fff"></div>
  <div class="a" style="left:15px;top:429px;width:61px;text-align:center;font-size:9px;line-height:12px;color:#333;font-weight:bold">分类</div>
  <div class="a" style="left:75px;top:429px;width:80px;text-align:center;font-size:9px;line-height:12px;color:#3a80c8;font-weight:bold">设置值</div>
  <div class="a" style="left:155px;top:429px;width:81px;text-align:center;font-size:9px;line-height:12px;color:#333;font-weight:bold">推荐值</div>
  <div class="a" style="left:236px;top:429px;width:180px;text-align:center;font-size:9px;line-height:12px;color:#333;font-weight:bold">描述</div>
  <div class="a" style="left:15px;top:455.5px;width:61px;text-align:center;font-size:9px;line-height:12px;color:#333">A</div>
  <div class="a" style="left:15px;top:481.5px;width:61px;text-align:center;font-size:9px;line-height:12px;color:#333">B</div>
  <div class="a" style="left:15px;top:507.5px;width:61px;text-align:center;font-size:9px;line-height:12px;color:#333">C</div>
  <div class="txt" style="left:85px;top:454.7px">99.99%</div>
  <div class="txt" style="left:85px;top:480.7px">99.50%</div>
  <div class="txt" style="left:85px;top:506.7px">99.00%</div>
  <div class="a" style="left:143px;top:456.5px;font-size:8px;line-height:10px;color:#222">▼</div>
  <div class="a" style="left:143px;top:482.5px;font-size:8px;line-height:10px;color:#222">▼</div>
  <div class="txt" style="left:163.5px;top:454.5px">95.00%</div>
  <div class="txt" style="left:163.5px;top:480.5px">95.00%</div>
  <div class="txt" style="left:163.5px;top:506.5px">95.00%</div>
  <div class="a" style="left:236px;top:455.5px;width:180px;text-align:center;font-size:9px;line-height:12px;color:#e0201c">提前期长&amp;连续性要求</div>
  <div class="a" style="left:236px;top:481.5px;width:180px;text-align:center;font-size:9px;line-height:12px;color:#e0201c">提前期中&amp;连续性要求</div>
  <div class="a" style="left:236px;top:507.5px;width:180px;text-align:center;font-size:9px;line-height:12px;color:#e0201c">提前期短&amp;连续性要求</div>
  <div class="a" style="left:471.5px;top:438px;font-size:10.7px;line-height:12px;color:#e8b04e">提前期长短</div>
  <svg class="a" style="left:531px;top:447px" width="9" height="70" viewBox="0 0 9 70"><path d="M4.5 1 L4.5 70 M1.5 4.5 L4.5 1.5 L7.5 4.5" fill="none" stroke="#cfcfcf" stroke-width="0.9"/></svg>
  <div class="a" style="left:473.5px;top:486.5px;font-size:10px;line-height:12px;color:#4f95d6">H:提前期长</div>
  <div class="a" style="left:617.5px;top:459px;width:0;height:60px;border-left:1px dashed #ddd"></div>
  <div class="a" style="left:701.5px;top:459px;width:0;height:60px;border-left:1px dashed #ddd"></div>
  <div class="a" style="left:551.5px;top:482px;width:50.5px;height:21.5px;background:#ebb55a;color:#fff;font-size:10px;line-height:21px;text-align:center">G:60%</div>
  <div class="a" style="left:635px;top:482px;width:50.5px;height:21.5px;background:#9f98de;color:#fff;font-size:10px;line-height:21px;text-align:center">D:90%</div>
  <div class="a" style="left:717px;top:482px;width:51px;height:21.5px;background:#8ec6df;color:#fff;font-size:10px;line-height:21px;text-align:center">A:95%</div>
  <svg class="a" style="left:710px;top:447px" width="50" height="40" viewBox="0 0 50 40">
    <defs><filter id="sh" x="-20%" y="-20%" width="150%" height="150%"><feDropShadow dx="0.8" dy="0.8" stdDeviation="0.6" flood-color="#000" flood-opacity="0.35"/></filter></defs>
    <g filter="url(#sh)">
    <path d="M17 2.5 C25.5 2.5 32 8 32 14.5 C32 21 25.5 26.5 17 26.5 C15 26.5 13.5 26.2 12 25.8 L6.5 29 L7.8 24.2 C4.3 22 2 18.5 2 14.5 C2 8 8.5 2.5 17 2.5 Z" fill="#fff" stroke="#cfcfcf" stroke-width="0.8"/>
    <circle cx="11.5" cy="10.5" r="1.4" fill="#fff" stroke="#aaa" stroke-width="0.7"/><circle cx="21.5" cy="10.5" r="1.4" fill="#fff" stroke="#aaa" stroke-width="0.7"/>
    <path d="M32 14 C39.5 14 45.5 18.8 45.5 25 C45.5 28.5 43.5 31.6 40.5 33.6 L41.6 37.8 L37 35.3 C35.5 35.8 33.8 36 32 36 C24.5 36 18.5 31.2 18.5 25 C18.5 18.8 24.5 14 32 14 Z" fill="#fff" stroke="#cfcfcf" stroke-width="0.8"/>
    <circle cx="27" cy="21.5" r="1.3" fill="#fff" stroke="#aaa" stroke-width="0.7"/><circle cx="36.5" cy="21.5" r="1.3" fill="#fff" stroke="#aaa" stroke-width="0.7"/>
    </g></svg>
  <div class="a" style="left:759px;top:453px;font-size:26.5px;line-height:32px;color:#fff;letter-spacing:-0.6px;text-shadow:0.8px 0.8px 0.8px rgba(0,0,0,.3),-0.4px -0.4px 0 #e2e2e2">第1供应链</div>
  <div class="a" style="left:0;top:512px;width:910px;height:4px;background:linear-gradient(#fafafa,#e6e6e6 60%,#d8d8d8)"></div>
  <div class="a" style="left:0;top:516px;width:910px;height:2px;background:#f2f2f2"></div>
</div>
</body></html>
